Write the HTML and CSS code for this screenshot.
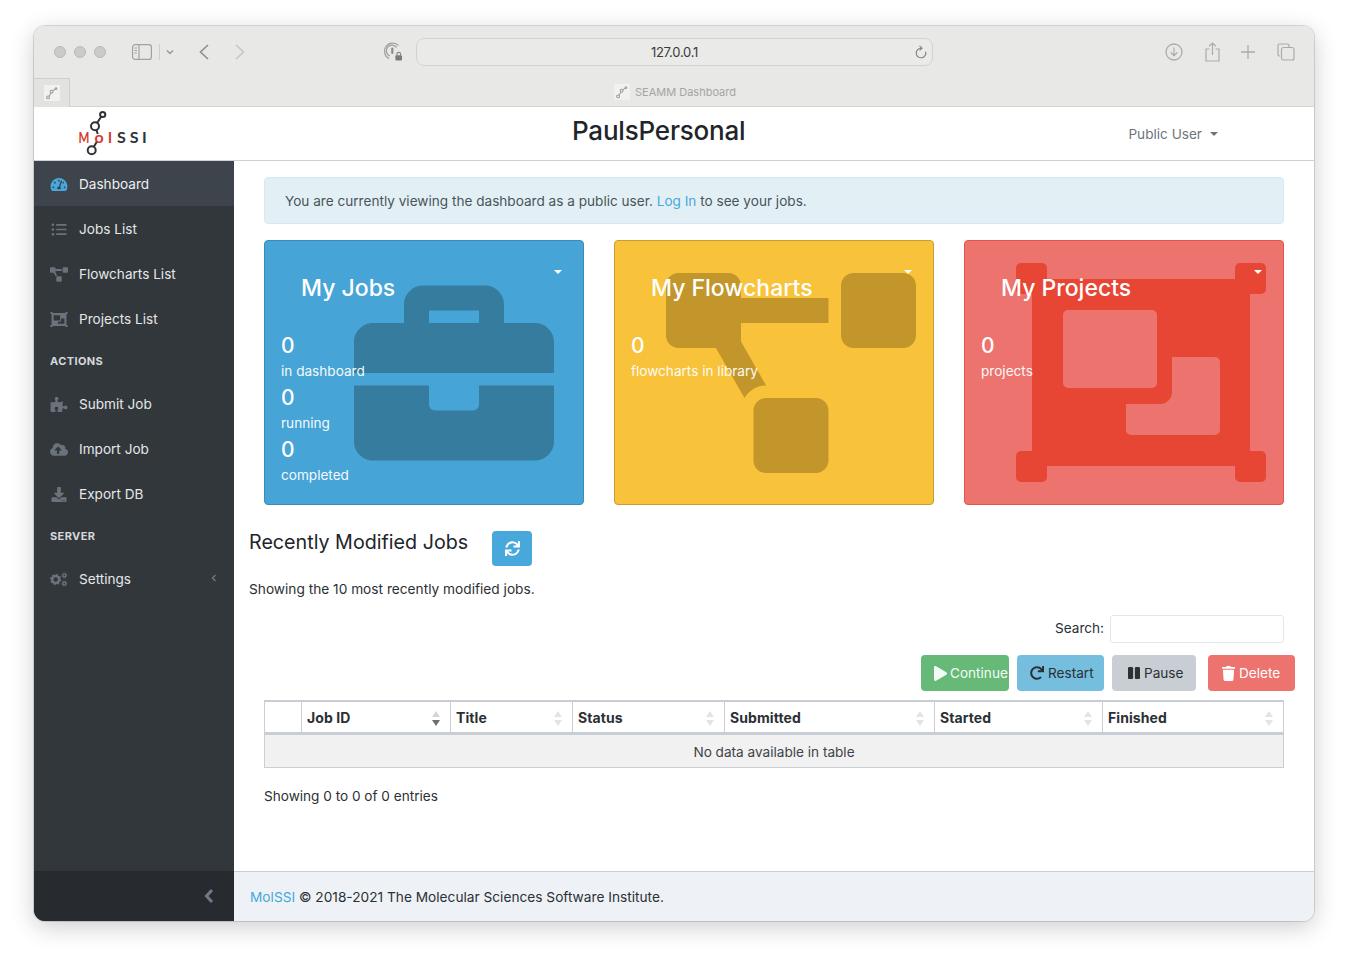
FILE: index.html
```html
<!DOCTYPE html>
<html lang="en">
<head>
<meta charset="utf-8">
<title>SEAMM Dashboard</title>
<link rel="stylesheet" href="styles.css">
</head>
<body>
<svg class="defs" xmlns="http://www.w3.org/2000/svg">
  <symbol id="i-gauge" viewBox="0 0 576 512"><path d="M288 32C128.94 32 0 160.94 0 320c0 52.8 14.25 102.26 39.06 144.8 5.61 9.62 16.3 15.2 27.44 15.2h443c11.14 0 21.83-5.58 27.44-15.2C561.75 422.26 576 372.8 576 320c0-159.06-128.94-288-288-288zm0 64c14.71 0 26.58 10.13 30.32 23.65-1.11 2.26-2.64 4.23-3.45 6.67l-9.22 27.67c-5.13 3.49-10.97 6.01-17.64 6.01-17.67 0-32-14.33-32-32S270.33 96 288 96zM96 384c-17.67 0-32-14.33-32-32s14.33-32 32-32 32 14.33 32 32-14.33 32-32 32zm48-160c-17.67 0-32-14.33-32-32s14.33-32 32-32 32 14.33 32 32-14.33 32-32 32zm246.77-72.41l-61.33 184C343.13 347.33 352 364.54 352 384c0 11.72-3.38 22.55-8.88 32H232.88c-5.5-9.45-8.88-20.28-8.88-32 0-33.94 26.5-61.43 59.9-63.59l61.34-184.01c4.17-12.56 17.73-19.45 30.36-15.17 12.57 4.19 19.35 17.77 15.17 30.36zm14.66 57.2l15.52-46.55c3.47-1.29 7.13-2.23 11.05-2.23 17.67 0 32 14.33 32 32s-14.33 32-32 32c-11.38-.01-20.89-6.28-26.57-15.22zM480 384c-17.67 0-32-14.33-32-32s14.33-32 32-32 32 14.33 32 32-14.33 32-32 32z"/></symbol>
  <symbol id="i-list" viewBox="0 0 512 512"><circle cx="48" cy="96" r="44"/><circle cx="48" cy="256" r="44"/><circle cx="48" cy="416" r="44"/><rect x="160" y="68" width="352" height="56" rx="12"/><rect x="160" y="228" width="352" height="56" rx="12"/><rect x="160" y="388" width="352" height="56" rx="12"/></symbol>
  <symbol id="i-diagram" viewBox="0 0 640 512"><path d="M384 320H256c-17.67 0-32 14.33-32 32v128c0 17.67 14.33 32 32 32h128c17.67 0 32-14.33 32-32V352c0-17.67-14.33-32-32-32zM192 32c0-17.67-14.33-32-32-32H32C14.33 0 0 14.33 0 32v128c0 17.67 14.33 32 32 32h95.72l73.16 128.04C211.98 300.98 232.4 288 256 288h.28L192 175.51V128h224V64H192V32zM608 0H480c-17.67 0-32 14.33-32 32v128c0 17.67 14.33 32 32 32h128c17.67 0 32-14.33 32-32V32c0-17.67-14.33-32-32-32z"/></symbol>
  <symbol id="i-ungroup" viewBox="0 0 250 219"><path fill-rule="evenodd" d="M5 0h21a5 5 0 0 1 5 5v11h188V5a5 5 0 0 1 5-5h21a5 5 0 0 1 5 5v21a5 5 0 0 1-5 5h-11v157h11a5 5 0 0 1 5 5v21a5 5 0 0 1-5 5h-21a5 5 0 0 1-5-5v-11H31v11a5 5 0 0 1-5 5H5a5 5 0 0 1-5-5v-21a5 5 0 0 1 5-5h11V31H5a5 5 0 0 1-5-5V5a5 5 0 0 1 5-5zM52 47a5 5 0 0 0-5 5v68a5 5 0 0 0 5 5h84a5 5 0 0 0 5-5V52a5 5 0 0 0-5-5zM156 94h43a5 5 0 0 1 5 5v68a5 5 0 0 1-5 5h-84a5 5 0 0 1-5-5v-26h34a12 12 0 0 0 12-12z"/></symbol>
  <symbol id="i-puzzle" viewBox="0 0 576 512"><path d="M519.442 288.651c-41.519 0-59.5 31.593-82.058 31.593C377.409 320.244 432 144 432 144s-196.288 80-196.288-3.297c0-35.827 36.288-46.25 36.288-85.985C272 19.216 243.885 0 210.539 0c-34.654 0-66.366 18.891-66.366 56.346 0 41.364 31.711 59.277 31.711 81.75C175.885 207.719 0 166.758 0 166.758v333.237s178.635 41.047 178.635-28.662c0-22.473-40-40.107-40-81.471 0-37.456 29.25-56.346 63.577-56.346 33.673 0 61.788 19.216 61.788 54.717 0 39.735-36.288 50.158-36.288 85.985 0 60.803 129.675 25.73 181.23 25.73 0 0-34.725-120.101 25.827-120.101 35.962 0 46.423 36.152 86.308 36.152C556.712 416 576 387.99 576 354.443c0-34.199-18.962-65.792-56.558-65.792z"/></symbol>
  <symbol id="i-cloud" viewBox="0 0 640 512"><path d="M537.6 226.6c4.1-10.7 6.4-22.4 6.4-34.6 0-53-43-96-96-96-19.7 0-38.1 6-53.3 16.2C367 64.2 315.3 32 256 32c-88.4 0-160 71.6-160 160 0 2.7.1 5.4.2 8.1C40.2 219.8 0 273.2 0 336c0 79.5 64.5 144 144 144h368c70.7 0 128-57.3 128-128 0-61.9-44-113.6-102.4-125.4zM393.4 288H328v112c0 8.8-7.2 16-16 16h-48c-8.8 0-16-7.2-16-16V288h-65.4c-14.3 0-21.4-17.2-11.3-27.3l105.4-105.4c6.2-6.2 16.4-6.2 22.6 0l105.4 105.4c10.1 10.1 2.9 27.3-11.3 27.3z"/></symbol>
  <symbol id="i-download" viewBox="0 0 512 512"><path d="M216 0h80c13.3 0 24 10.7 24 24v168h87.7c17.8 0 26.7 21.5 14.1 34.1L269.7 378.3c-7.5 7.5-19.8 7.5-27.3 0L90.1 226.1c-12.6-12.6-3.7-34.1 14.1-34.1H192V24c0-13.3 10.7-24 24-24zm296 376v112c0 13.3-10.7 24-24 24H24c-13.3 0-24-10.7-24-24V376c0-13.3 10.7-24 24-24h146.7l49 49c20.1 20.1 52.5 20.1 72.6 0l49-49H488c13.3 0 24 10.7 24 24zm-124 88c0-11-9-20-20-20s-20 9-20 20 9 20 20 20 20-9 20-20zm64 0c0-11-9-20-20-20s-20 9-20 20 9 20 20 20 20-9 20-20z"/></symbol>
  <symbol id="i-cogs" viewBox="0 0 640 512"><circle cx="200" cy="256" r="125" fill="none" stroke="currentColor" stroke-width="90"/><circle cx="200" cy="256" r="175" fill="none" stroke="currentColor" stroke-width="50" stroke-dasharray="62 75"/><circle cx="510" cy="110" r="55" fill="none" stroke="currentColor" stroke-width="50"/><circle cx="510" cy="110" r="90" fill="none" stroke="currentColor" stroke-width="28" stroke-dasharray="36 35"/><circle cx="510" cy="400" r="55" fill="none" stroke="currentColor" stroke-width="50"/><circle cx="510" cy="400" r="90" fill="none" stroke="currentColor" stroke-width="28" stroke-dasharray="36 35"/></symbol>
  <symbol id="i-briefcase" viewBox="0 0 512 512"><path d="M320 336c0 8.84-7.16 16-16 16h-96c-8.84 0-16-7.16-16-16v-48H0v144c0 25.6 22.4 48 48 48h416c25.6 0 48-22.4 48-48V288H320v48zm144-208h-80V80c0-25.6-22.4-48-48-48H176c-25.6 0-48 22.4-48 48v48H48c-25.6 0-48 22.4-48 48v80h512v-80c0-25.6-22.4-48-48-48zm-144 0H192V96h128v32z"/></symbol>
  <symbol id="i-fav" viewBox="0 0 16 16"><g fill="none" stroke="currentColor" stroke-width="1.2"><circle cx="3.5" cy="13" r="1.6"/><circle cx="7.5" cy="6.5" r="1.6"/><circle cx="12.5" cy="3" r="1"/><path d="M4.5 11.8 7 8M8.7 5.6 11.8 3.6"/></g></symbol>
</svg>

<div class="window">
  <div class="titlebar">
    <div class="lights"><span class="light"></span><span class="light"></span><span class="light"></span></div>
    <svg class="tb-sidebar" width="20" height="16" viewBox="0 0 20 16"><rect x=".6" y=".6" width="18.8" height="14.8" rx="2.5" fill="none" stroke="#a2a2a2" stroke-width="1.2"/><path d="M7 .6v14.8" stroke="#a2a2a2" stroke-width="1.2"/><path d="M2.5 4h2.5M2.5 6.5h2.5M2.5 9h2.5" stroke="#a2a2a2"/></svg>
    <span class="tb-sep"></span>
    <svg class="tb-drop" width="8" height="6" viewBox="0 0 8 6"><path d="M1 1.5 4 4.5 7 1.5" fill="none" stroke="#9a9a9a" stroke-width="1.5"/></svg>
    <svg class="tb-back" width="12" height="16" viewBox="0 0 12 16"><path d="M10 1 2.5 8 10 15" fill="none" stroke="#8e8e8e" stroke-width="1.6"/></svg>
    <svg class="tb-fwd" width="12" height="16" viewBox="0 0 12 16"><path d="M2 1 9.5 8 2 15" fill="none" stroke="#c6c6c6" stroke-width="1.6"/></svg>
    <svg class="tb-pass" width="20" height="20" viewBox="0 0 20 20"><g fill="none" stroke="#a0a0a0" stroke-width="1.3"><path d="M15.5 3.5A8.2 8.2 0 1 0 6 16.6"/><path d="M13.5 5.5A5.6 5.6 0 1 0 7 14"/></g><rect x="8.2" y="5.5" width="2.2" height="6.5" rx="1" fill="#8c8c8c"/><rect x="12.4" y="13.2" width="6.6" height="5.4" rx="1" fill="#7b7b7b"/><path d="M13.9 13.2v-1.2a1.8 1.8 0 0 1 3.6 0v1.2" fill="none" stroke="#7b7b7b" stroke-width="1.1"/></svg>
    <div class="urlbar"><span class="url">127.0.0.1</span>
      <svg class="tb-reload" width="12" height="15" viewBox="0 0 12 15"><path d="M6 3.200a4.800 4.800 0 1 0 4.600 3.400" fill="none" stroke="#7d7d7d" stroke-width="1.1"/><path d="M4.500 .8 7 3.200 4.500 5.400" fill="none" stroke="#7d7d7d" stroke-width="1.1"/></svg>
    </div>
    <div class="tb-right">
      <svg width="18" height="18" viewBox="0 0 18 18"><circle cx="9" cy="9" r="8" fill="none" stroke="#ababab" stroke-width="1.3"/><path d="M9 4.500v8M5.800 9.500 9 12.700l3.200-3.200" fill="none" stroke="#ababab" stroke-width="1.2"/></svg>
      <svg width="15" height="20" viewBox="0 0 15 20"><path d="M4.500 7H1v12h13V7h-3.500M7.500 13V1M4 4.200 7.500 1 11 4.200" fill="none" stroke="#ababab" stroke-width="1.2"/></svg>
      <svg width="14" height="14" viewBox="0 0 14 14"><path d="M7 0v14M0 7h14" stroke="#ababab" stroke-width="1.3"/></svg>
      <svg width="18" height="18" viewBox="0 0 18 18"><path d="M3 13H2.500A1.500 1.500 0 0 1 1 11.500V2.500A1.500 1.500 0 0 1 2.500 1h8A1.500 1.500 0 0 1 12 2.500V4" fill="none" stroke="#ababab" stroke-width="1.2"/><rect x="4.500" y="4.500" width="12.500" height="12.500" rx="2" fill="none" stroke="#ababab" stroke-width="1.2"/></svg>
    </div>
  </div>

  <div class="tabbar">
    <div class="tab"><span class="fav-box"><svg class="fav" width="14" height="14"><use href="#i-fav"/></svg></span></div>
    <div class="tab-title"><span class="fav-box"><svg class="fav" width="14" height="14"><use href="#i-fav"/></svg></span><span>SEAMM Dashboard</span></div>
  </div>

  <header class="topbar">
    <svg class="logo" width="72" height="50" viewBox="0 0 72 50">
      <g fill="none" stroke="#2f3338" stroke-width="2">
        <circle cx="24.700" cy="6.500" r="2.600"/>
        <circle cx="17" cy="18.200" r="4"/>
        <circle cx="13.700" cy="42.200" r="4"/>
        <path d="M23.200 8.700 19.200 14.800M18.400 22 19.800 26M19 33.400 15.800 38.700"/>
      </g>
      <text class="logo-red" transform="translate(.5 35) scale(.72 1)">M</text>
      <text class="logo-red" x="16.400 30" y="35">ol</text>
      <text class="logo-dark" x="39 51.700 64" y="35">SSI</text>
    </svg>
    <h1 class="site-title">PaulsPersonal</h1>
    <div class="user">Public User<span class="caret caret-grey"></span></div>
  </header>

  <div class="body">
    <aside class="sidebar">
      <nav class="nav">
        <a class="nav-item active"><svg class="nav-icon"><use href="#i-gauge"/></svg>Dashboard</a>
        <a class="nav-item"><svg class="nav-icon"><use href="#i-list"/></svg>Jobs List</a>
        <a class="nav-item"><svg class="nav-icon"><use href="#i-diagram"/></svg>Flowcharts List</a>
        <a class="nav-item"><svg class="nav-icon"><use href="#i-ungroup"/></svg>Projects List</a>
        <div class="nav-head">ACTIONS</div>
        <a class="nav-item"><svg class="nav-icon"><use href="#i-puzzle"/></svg>Submit Job</a>
        <a class="nav-item"><svg class="nav-icon"><use href="#i-cloud"/></svg>Import Job</a>
        <a class="nav-item"><svg class="nav-icon"><use href="#i-download"/></svg>Export DB</a>
        <div class="nav-head">SERVER</div>
        <a class="nav-item"><svg class="nav-icon"><use href="#i-cogs"/></svg>Settings
          <svg class="nav-chev" width="6" height="8" viewBox="0 0 6 8"><path d="M4.500 1 1.500 4l3 3" fill="none" stroke="#6c757d" stroke-width="1.500"/></svg></a>
      </nav>
      <div class="side-toggle"><svg width="10" height="16" viewBox="0 0 10 16"><path d="M8 2 2.500 8 8 14" fill="none" stroke="#6c7a89" stroke-width="3"/></svg></div>
    </aside>

    <div class="main">
      <main class="content">
        <div class="alert">You are currently viewing the dashboard as a public user. <a class="link">Log In</a> to see your jobs.</div>

        <section class="cards">
          <article class="card card-blue">
            <svg class="card-bg bg-jobs"><use href="#i-briefcase"/></svg>
            <span class="caret card-caret"></span>
            <h2 class="card-title">My Jobs</h2>
            <div class="stat"><div class="num">0</div><div class="lbl">in dashboard</div></div>
            <div class="stat"><div class="num">0</div><div class="lbl">running</div></div>
            <div class="stat"><div class="num">0</div><div class="lbl">completed</div></div>
          </article>
          <article class="card card-yellow">
            <svg class="card-bg bg-flow"><use href="#i-diagram"/></svg>
            <span class="caret card-caret"></span>
            <h2 class="card-title">My Flowcharts</h2>
            <div class="stat"><div class="num">0</div><div class="lbl">flowcharts in library</div></div>
          </article>
          <article class="card card-red">
            <svg class="card-bg bg-proj"><use href="#i-ungroup"/></svg>
            <span class="caret card-caret"></span>
            <h2 class="card-title">My Projects</h2>
            <div class="stat"><div class="num">0</div><div class="lbl">projects</div></div>
          </article>
        </section>

        <div class="recent-head">
          <h3 class="recent-title">Recently Modified Jobs</h3>
          <button class="refresh"><svg width="15" height="15" viewBox="0 0 512 512"><path fill="#fff" d="M440.65 12.57l4 82.77A247.16 247.16 0 0 0 255.83 8C134.73 8 33.91 94.92 12.29 209.82A12 12 0 0 0 24.09 224h49.05a12 12 0 0 0 11.67-9.26 175.91 175.91 0 0 1 317-56.94l-101.46-4.86a12 12 0 0 0-12.57 12v47.41a12 12 0 0 0 12 12H500a12 12 0 0 0 12-12V12a12 12 0 0 0-12-12h-47.37a12 12 0 0 0-11.98 12.57zM255.83 432a175.61 175.61 0 0 1-146-77.8l101.8 4.87a12 12 0 0 0 12.57-12v-47.4a12 12 0 0 0-12-12H12a12 12 0 0 0-12 12V500a12 12 0 0 0 12 12h47.35a12 12 0 0 0 12-12.6l-4.15-82.57A247.17 247.17 0 0 0 255.83 504c121.11 0 221.93-86.92 243.55-201.82a12 12 0 0 0-11.8-14.18h-49.05a12 12 0 0 0-11.67 9.26A175.86 175.86 0 0 1 255.83 432z"/></svg></button>
        </div>
        <p class="recent-sub">Showing the 10 most recently modified jobs.</p>

        <div class="search-row"><label class="search-label">Search:</label><span class="search-input"></span></div>

        <div class="actions">
          <button class="btn btn-continue"><svg width="13" height="15" viewBox="0 0 448 512"><path fill="currentColor" d="M424.4 214.7L72.4 6.6C43.8-10.3 0 6.1 0 47.9V464c0 37.5 40.7 60.1 72.4 41.3l352-208c31.4-18.5 31.5-64.1 0-82.6z"/></svg>Continue</button>
          <button class="btn btn-restart"><svg width="14" height="14" viewBox="0 0 512 512"><path fill="currentColor" d="M500.33 0h-47.41a12 12 0 0 0-12 12.57l4 82.76A247.42 247.42 0 0 0 256 8C119.34 8 7.9 119.53 8 256.19 8.1 393.07 119.1 504 256 504a247.1 247.1 0 0 0 166.18-63.91 12 12 0 0 0 .48-17.43l-34-34a12 12 0 0 0-16.38-.55A176 176 0 1 1 402.1 157.8l-101.53-4.87a12 12 0 0 0-12.57 12v47.41a12 12 0 0 0 12 12h200.33a12 12 0 0 0 12-12V12a12 12 0 0 0-12-12z"/></svg>Restart</button>
          <button class="btn btn-pause"><svg width="12" height="14" viewBox="0 0 448 512"><path fill="currentColor" d="M144 479H48c-26.5 0-48-21.5-48-48V79c0-26.5 21.5-48 48-48h96c26.5 0 48 21.5 48 48v352c0 26.5-21.5 48-48 48zm304-48V79c0-26.5-21.5-48-48-48h-96c-26.5 0-48 21.5-48 48v352c0 26.5 21.5 48 48 48h96c26.5 0 48-21.5 48-48z"/></svg>Pause</button>
          <button class="btn btn-delete"><svg width="13" height="15" viewBox="0 0 448 512"><path fill="currentColor" d="M432 32H312l-9.4-18.7A24 24 0 0 0 281.1 0H166.800a23.720 23.720 0 0 0-21.400 13.300L136 32H16A16 16 0 0 0 0 48v32a16 16 0 0 0 16 16h416a16 16 0 0 0 16-16V48a16 16 0 0 0-16-16zM53.200 467a48 48 0 0 0 47.900 45h245.800a48 48 0 0 0 47.900-45L416 128H32z"/></svg>Delete</button>
        </div>

        <table class="jobs">
          <thead>
            <tr>
              <th class="c0"></th>
              <th class="c1 sort sort-active">Job ID</th>
              <th class="c2 sort">Title</th>
              <th class="c3 sort">Status</th>
              <th class="c4 sort">Submitted</th>
              <th class="c5 sort">Started</th>
              <th class="c6 sort">Finished</th>
            </tr>
          </thead>
          <tbody>
            <tr><td class="empty" colspan="7">No data available in table</td></tr>
          </tbody>
        </table>
        <p class="info">Showing 0 to 0 of 0 entries</p>
      </main>
      <footer class="footer"><a class="link">MolSSI</a> © 2018-2021 The Molecular Sciences Software Institute.</footer>
    </div>
  </div>
</div>
</body>
</html>
```

FILE: styles.css
```css
* { box-sizing: border-box; }
html, body { margin: 0; padding: 0; background: #fff; }
body {
  height: 963px;
  padding: 26px 34px 0;
  overflow: hidden;
  font-family: Inter, "Liberation Sans", sans-serif;
  font-size: 13.6px;
  line-height: 21px;
  color: #2b3035;
}
.defs { display: none; }

.window {
  width: 1280px;
  height: 895px;
  display: flex;
  flex-direction: column;
  border-radius: 11px;
  overflow: hidden;
  background: #fff;
  box-shadow: 0 0 0 1px rgba(0,0,0,.13), 0 6px 24px rgba(0,0,0,.2);
}

/* browser chrome */
.titlebar {
  height: 52px;
  flex: none;
  display: flex;
  align-items: center;
  background: #e8e8e6;
}
.lights { display: flex; gap: 8px; margin-left: 20px; }
.light { width: 12px; height: 12px; border-radius: 50%; background: #cbcbcb; border: 1px solid #b9b9b9; }
.tb-sidebar { margin-left: 26px; }
.tb-sep { width: 1px; height: 16px; background: #cfcfcf; margin-left: 7px; }
.tb-drop { margin-left: 6px; }
.tb-back { margin-left: 24px; }
.tb-fwd { margin-left: 24px; }
.tb-pass { margin-left: 137px; }
.urlbar {
  width: 517px;
  height: 28px;
  margin-left: 13px;
  display: flex;
  align-items: center;
  justify-content: center;
  position: relative;
  border: 1px solid #d2d2d0;
  border-radius: 8px;
  background: #eaeae8;
}
.url { font-size: 13px; letter-spacing: -.25px; color: #3b3b3b; }
.tb-reload { position: absolute; right: 5px; top: 6px; }
.tb-right { display: flex; align-items: center; gap: 21.6px; margin-left: 232px; }

.tabbar {
  height: 29px;
  flex: none;
  display: flex;
  align-items: center;
  position: relative;
  background: #e8e8e6;
  border-bottom: 1px solid #d4d4d4;
}
.tab {
  width: 36px;
  height: 29px;
  display: flex;
  align-items: center;
  justify-content: center;
  background: #e2e2e0;
  border-top: 1px solid #cfcfcf;
  border-right: 1px solid #cfcfcf;
}
.fav-box { width: 16px; height: 16px; display: flex; align-items: center; justify-content: center; background: #f1f1f0; }
.fav { color: #9a9a9a; }
.tab-title {
  display: flex;
  align-items: center;
  gap: 5px;
  margin-left: 544px;
  font-size: 11px;
  color: #a5a5a5;
}

.topbar {
  height: 54px;
  flex: none;
  display: flex;
  align-items: center;
  background: #fff;
  border-bottom: 1px solid #cfd2d5;
}
.logo { margin-left: 44px; margin-top: -2px; flex: none; }
.logo-red { font-family: Lato, "Liberation Sans", sans-serif; font-size: 16px; font-weight: 700; fill: #d83a2f; }
.logo-dark { font-family: Lato, "Liberation Sans", sans-serif; font-size: 16px; font-weight: 700; fill: #2f3338; }
.site-title { margin: 0 0 6px 422px; font-size: 26px; line-height: 34px; font-weight: 500; color: #212529; letter-spacing: -.2px; }
.user { margin-left: auto; margin-right: 96px; padding-top: 2px; color: #6c757d; display: flex; align-items: center; }
.caret { display: inline-block; width: 0; height: 0; border-left: 4px solid transparent; border-right: 4px solid transparent; border-top: 4px solid #fff; }
.caret-grey { border-top-color: #6c757d; margin-left: 8px; margin-top: -2px; }

.body { flex: 1; min-height: 0; display: flex; }

/* sidebar */
.sidebar { width: 200px; flex: none; display: flex; flex-direction: column; background: #32373b; }
.nav { flex: 1; }
.nav-item {
  height: 45px;
  display: flex;
  align-items: center;
  position: relative;
  padding: 2px 0 0 16px;
  color: #e4e7ea;
}
.nav-item.active { background: #3d444b; color: #eef0f2; }
.nav-icon { width: 18px; height: 15px; margin-right: 11px; flex: none; fill: #6a737c; color: #6a737c; }
.active .nav-icon { fill: #48a8dc; }
.nav-chev { position: absolute; right: 17px; top: 18px; }
.nav-head {
  height: 40px;
  display: flex;
  align-items: center;
  padding-left: 16px;
  font-size: 11px;
  font-weight: 700;
  letter-spacing: .4px;
  color: #d5d9dc;
}
.side-toggle {
  height: 50px;
  flex: none;
  display: flex;
  align-items: center;
  justify-content: flex-end;
  padding: 0 20px 0 0;
  background: #272b2f;
}

/* main */
.main { flex: 1; min-width: 0; display: flex; flex-direction: column; }
.content { flex: 1; padding-top: 16px; }
.alert {
  height: 47px;
  margin: 0 30px;
  padding: 13px 20px;
  background: #e2f0f6;
  border: 1px solid #d6e9f2;
  border-radius: 4px;
  color: #4b5359;
}
.link { color: #48a8dc; }

.cards { display: flex; gap: 30px; margin: 16px 30px 0; }
.card {
  width: 320px;
  height: 265px;
  position: relative;
  padding: 30px 16px 0;
  border-radius: 4px;
  border: 1px solid;
  color: #fff;
  overflow: hidden;
}
.card-blue { background: #46a5d6; border-color: #3b8cb6; }
.card-yellow { background: #f8c33b; border-color: #c79c30; }
.card-red { background: #ec736e; border-color: #e4544a; }
.card-bg { position: absolute; }
.bg-jobs { left: 89px; top: 32px; width: 200px; height: 200px; fill: #367c9f; }
.bg-flow { left: 51px; top: 32px; width: 250px; height: 200px; fill: #c2962a; }
.bg-proj { left: 51px; top: 22px; width: 250px; height: 219px; fill: #e74635; }
.card-caret { position: absolute; right: 21px; top: 29px; }
.card-title {
  position: relative;
  margin: 0 0 27px 20px;
  font-size: 23px;
  line-height: 34px;
  font-weight: 500;
}
.stat { position: relative; height: 52px; }
.num { font-size: 21px; line-height: 27px; font-weight: 500; }
.lbl { line-height: 24px; opacity: .95; }

.recent-head { display: flex; align-items: flex-start; margin: 26px 0 0 15px; height: 35px; }
.recent-title { margin: 0; font-size: 19.7px; line-height: 22px; font-weight: 400; color: #212529; }
.refresh {
  width: 40px;
  height: 35px;
  margin-left: 24px;
  padding: 0;
  display: flex;
  align-items: center;
  justify-content: center;
  border: 0;
  border-radius: 4px;
  background: #48a8dc;
}
.recent-sub { margin: 13px 0 0 15px; font-size: 13.7px; }

.search-row { display: flex; justify-content: flex-end; align-items: center; margin: 15px 30px 0 0; height: 28px; }
.search-label { margin-right: 6px; margin-bottom: 2px; }
.search-input { width: 174px; height: 28px; background: #fff; border: 1px solid #e4e7ea; border-radius: 3px; }

.actions { display: flex; margin: 12px 0 0 687px; }
.btn {
  height: 36px;
  padding: 0;
  display: flex;
  align-items: center;
  gap: 4px;
  border: 0;
  border-radius: 4px;
  font: inherit;
  white-space: nowrap;
  overflow: hidden;
}
.btn-continue { width: 88px; padding-left: 13px; gap: 3px; background: #66b977; color: #f4fbf6; }
.btn-restart { width: 87px; padding-left: 13px; margin-left: 8px; background: #75bedd; color: #2b3035; }
.btn-pause { width: 84px; padding-left: 16px; margin-left: 8px; background: #c8ced3; color: #2b3035; }
.btn-delete { width: 87px; padding-left: 14px; margin-left: 12px; background: #ec736e; color: #fff; }

.jobs {
  width: 1020px;
  margin: 9px 30px 0;
  table-layout: fixed;
  border-collapse: separate;
  border-spacing: 0;
  border: 1px solid #c8ced3;
  border-top-width: 2px;
}
.jobs th {
  height: 33px;
  padding: 0 5px;
  text-align: left;
  font-size: 14px;
  letter-spacing: .08px;
  font-weight: 700;
  color: #2b3035;
  border-left: 1px solid #c8ced3;
  border-bottom: 3px solid #c8ced3;
  position: relative;
}
.jobs th:first-child { border-left: 0; }
.c0 { width: 36px; }
.c1 { width: 149px; }
.c2 { width: 122px; }
.c3 { width: 152px; }
.c4 { width: 210px; }
.c5 { width: 168px; }
.sort::before, .sort::after {
  content: "";
  position: absolute;
  right: 10px;
  width: 0;
  height: 0;
  border-left: 4px solid transparent;
  border-right: 4px solid transparent;
}
.sort::before { top: 9px; border-bottom: 6px solid #e2e4e6; }
.sort::after { bottom: 6px; border-top: 6px solid #e2e4e6; }
.sort-active::before { border-bottom-color: #d3d5d7; }
.sort-active::after { border-top-color: #6e6e6e; }
.empty { height: 32px; padding: 2px 0 0; text-align: center; background: #f1f1f1; color: #3d4348; }
.info { margin: 18px 0 0 30px; }

.footer {
  height: 50px;
  flex: none;
  padding: 15px 16px 0;
  background: #eef2f6;
  border-top: 1px solid #c8ced3;
  font-size: 13.7px;
  color: #2b3035;
}
```
